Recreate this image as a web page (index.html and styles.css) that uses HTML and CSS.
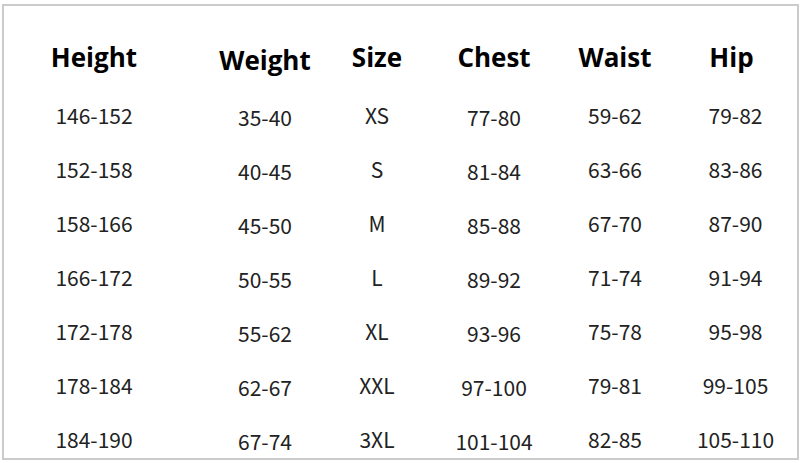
FILE: index.html
```html
<!DOCTYPE html>
<html lang="en">
<head>
<meta charset="utf-8">
<title>Size Chart</title>
<link rel="stylesheet" href="styles.css">
</head>
<body>
<div class="frame">
  <div class="chart">
    <div class="cell head">Height</div>
    <div class="cell head low">Weight</div>
    <div class="cell head">Size</div>
    <div class="cell head">Chest</div>
    <div class="cell head">Waist</div>
    <div class="cell head hip">Hip</div>

    <div class="cell">146-152</div><div class="cell low">35-40</div><div class="cell">XS</div><div class="cell low">77-80</div><div class="cell">59-62</div><div class="cell hip-val">79-82</div>
    <div class="cell">152-158</div><div class="cell low">40-45</div><div class="cell">S</div><div class="cell low">81-84</div><div class="cell">63-66</div><div class="cell hip-val">83-86</div>
    <div class="cell">158-166</div><div class="cell low">45-50</div><div class="cell">M</div><div class="cell low">85-88</div><div class="cell">67-70</div><div class="cell hip-val">87-90</div>
    <div class="cell">166-172</div><div class="cell low">50-55</div><div class="cell">L</div><div class="cell low">89-92</div><div class="cell">71-74</div><div class="cell hip-val">91-94</div>
    <div class="cell">172-178</div><div class="cell low">55-62</div><div class="cell">XL</div><div class="cell low">93-96</div><div class="cell">75-78</div><div class="cell hip-val">95-98</div>
    <div class="cell">178-184</div><div class="cell low">62-67</div><div class="cell">XXL</div><div class="cell low">97-100</div><div class="cell">79-81</div><div class="cell hip-val">99-105</div>
    <div class="cell">184-190</div><div class="cell low">67-74</div><div class="cell">3XL</div><div class="cell low">101-104</div><div class="cell">82-85</div><div class="cell hip-val">105-110</div>
  </div>
</div>
</body>
</html>
```

FILE: styles.css
```css
html, body {
  margin: 0;
  padding: 0;
  background: #ffffff;
  overflow: hidden;
}

.frame {
  margin: 4px 1px 3px 2px;
  height: 452px;
  border: 2px solid #cbcbcb;
  background: #ffffff;
}

.chart {
  display: grid;
  grid-template-columns: 180px 162px 62px 172px 70px 147px;
  grid-template-rows: 62px repeat(7, 54px);
  padding-top: 20px;
  justify-items: center;
  align-items: center;
  font-family: "Noto Sans CJK SC", "Noto Sans", sans-serif;
  font-size: 21px;
  color: #222222;
  white-space: nowrap;
}

.cell {
  line-height: 1;
}

.head {
  font-family: "Open Sans", "Noto Sans", sans-serif;
  font-weight: 700;
  font-size: 26px;
  color: #000000;
}

.low {
  padding-top: 5px;
}

.hip {
  padding-left: 16px;
}

.hip-val {
  padding-left: 24px;
}
```
